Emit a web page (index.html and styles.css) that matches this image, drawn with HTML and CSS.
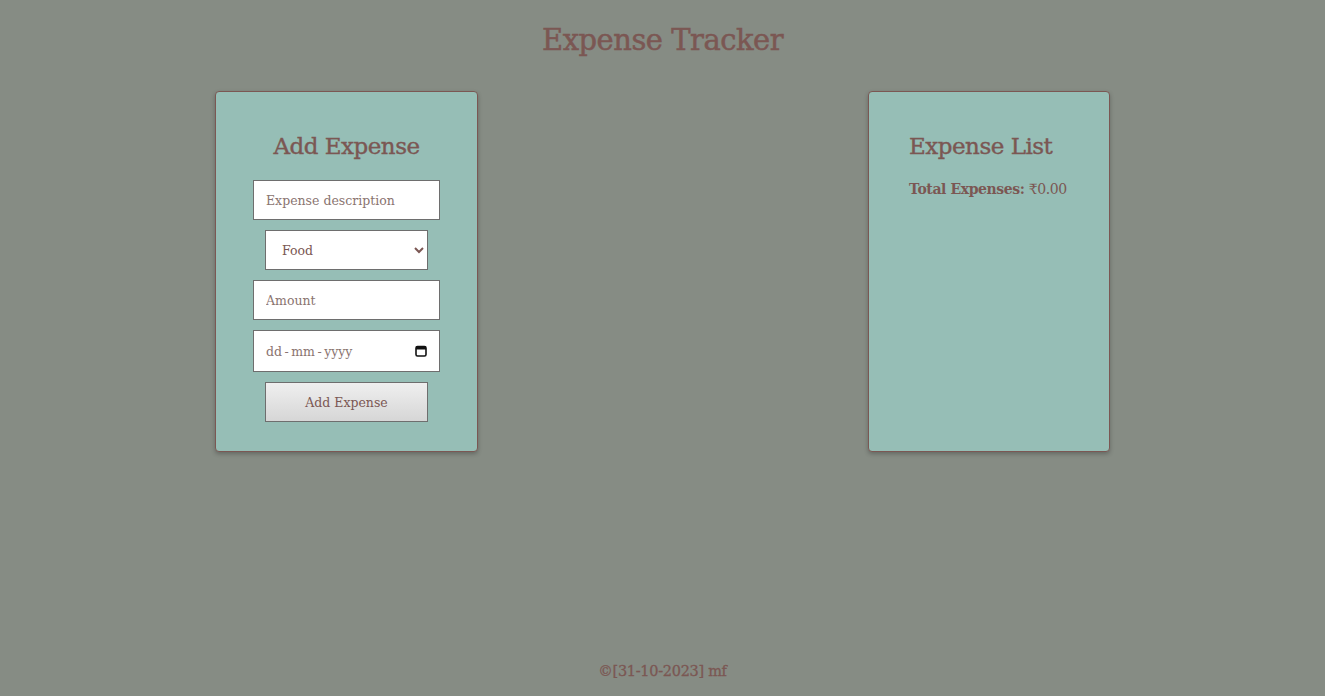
FILE: index.html
```html
<!DOCTYPE html>
<html lang="en">
<head>
<meta charset="utf-8">
<title>Expense Tracker</title>
<link rel="stylesheet" href="styles.css">
</head>
<body>
<div class="page">
  <h1 class="title">Expense Tracker</h1>
  <div class="cards">
    <div class="card card-form">
      <h2 class="card-title center">Add Expense</h2>
      <form class="form">
        <input class="field" type="text" placeholder="Expense description">
        <select class="field narrow">
          <option>Food</option>
          <option>Transport</option>
          <option>Other</option>
        </select>
        <input class="field" type="text" placeholder="Amount">
        <label class="date-wrap">
          <input class="field date" type="text" placeholder="dd&#8201;-&#8201;mm&#8201;-&#8201;yyyy">
          <svg class="cal" width="12" height="12" viewBox="0 0 12 12" aria-hidden="true">
            <rect x="1" y="1.5" width="10" height="9.5" rx="1.5" fill="none" stroke="#111" stroke-width="1.6"/>
            <rect x="1" y="1.5" width="10" height="3" fill="#111"/>
          </svg>
        </label>
        <button type="button" class="field narrow btn">Add Expense</button>
      </form>
    </div>
    <div class="card card-list">
      <h2 class="card-title">Expense List</h2>
      <p class="total"><b>Total Expenses:</b> ₹0.00</p>
    </div>
  </div>
  <footer class="footer">©[31-10-2023] mf</footer>
</div>
</body>
</html>
```
FILE: styles.css
```css
html, body {
  margin: 0;
  padding: 0;
  height: 100%;
}
body {
  background: #868c84;
  color: #7b5753;
  font-family: "DejaVu Serif", "Liberation Serif", serif;
}
.page {
  min-height: 100%;
  display: flex;
  flex-direction: column;
  align-items: center;
}
.title {
  margin: 20px 0 0;
  font-size: 29px;
  font-weight: normal;
  line-height: 40px;
  letter-spacing: -0.5px;
  -webkit-text-stroke: 0.5px #7b5753;
}
.cards {
  width: 895px;
  display: flex;
  justify-content: space-between;
  align-items: flex-start;
  margin-top: 31px;
}
.card {
  background: #96beb6;
  border: 1px solid #7b5753;
  border-radius: 4px;
  box-shadow: 0 2px 4px rgba(0,0,0,0.25);
  box-sizing: border-box;
  height: 361px;
}
.card-form {
  width: 263px;
  padding: 39px 37px 0;
}
.card-list {
  width: 242px;
  padding: 39px 40px 0;
}
.card-title {
  margin: 0;
  font-size: 23px;
  font-weight: normal;
  line-height: 30px;
  letter-spacing: -0.5px;
  -webkit-text-stroke: 0.4px #7b5753;
}
.center { text-align: center; }
.form {
  margin-top: 19px;
  display: flex;
  flex-direction: column;
  align-items: center;
  gap: 10px;
}
.field {
  box-sizing: border-box;
  width: 187px;
  height: 40px;
  border: 1px solid #6e6e6e;
  background: #fff;
  font-family: "DejaVu Serif", "Liberation Serif", serif;
  font-size: 12.5px;
  color: #7b5753;
  padding: 0 12px;
  margin: 0;
  border-radius: 0;
  outline: none;
}
.field::placeholder { color: #8a7470; }
.narrow { width: 163px; }
select.field { padding: 0 12px; }
.date-wrap {
  position: relative;
  display: block;
}
.date { height: 42px; }
.cal {
  position: absolute;
  right: 13px;
  top: 15px;
}
.btn {
  background: linear-gradient(#efefef, #d6d6d6);
  color: #7b5753;
  cursor: pointer;
}
.total {
  margin: 20px 0 0;
  font-size: 14px;
  letter-spacing: -0.4px;
  white-space: nowrap;
}
.total b { font-weight: bold; }
.footer {
  margin-top: auto;
  padding-bottom: 17px;
  font-size: 14.5px;
  letter-spacing: -0.3px;
  -webkit-text-stroke: 0.3px #7b5753;
}
```
